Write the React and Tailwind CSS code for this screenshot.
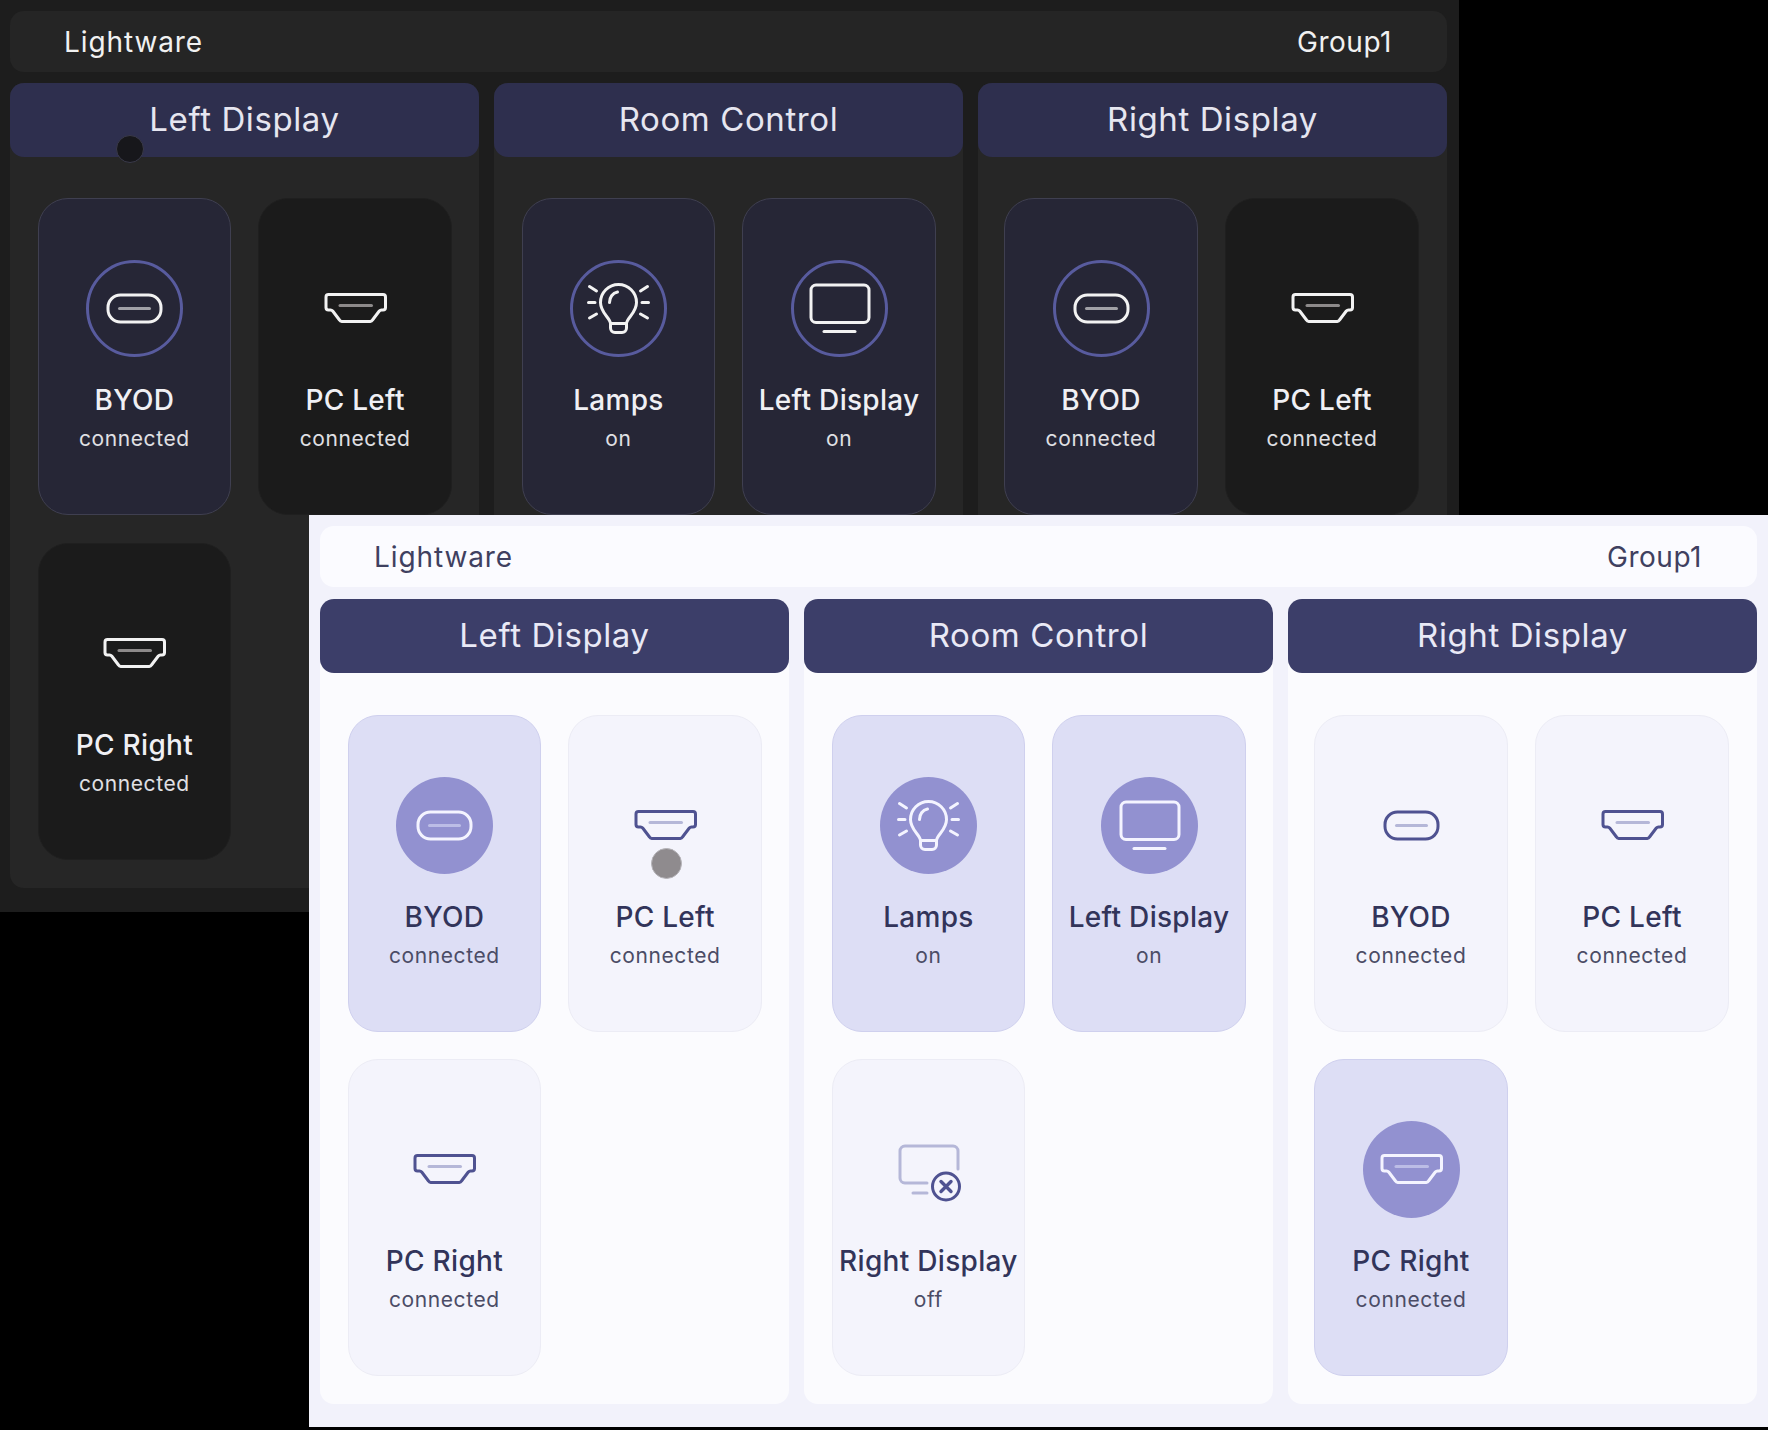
import React from "react";

const themes = {
  dark: {
    window: "bg-[#1d1d1d] pt-[11px] pl-[10px] pr-[12px]",
    bar: "bg-[#252525] text-[#f1f1f1]",
    gap: "mt-[11px]",
    body: "pt-[41px] gap-y-[28px]",
    panel: "bg-[#262626]",
    header: "bg-[#2e2f4e] text-[#e6e6f0]",
    on: "bg-[#262636] border-[#3f3f50]",
    off: "bg-[#1b1b1b] border-[#1f1f1f]",
    circle: "border-[3px] border-[#585b9e]",
    title: "text-[#f0f0f4]",
    sub: "text-[#e0e0e4]",
    icon: "#f2f2f2",
    iconOn: "#f2f2f2",
    slot: "#8d8a8a",
    slotOn: "#a0a0a6",
  },
  light: {
    window: "bg-[#f2f2fb] pt-[11px] px-[11px]",
    bar: "bg-[#fbfbff] text-[#3f4060]",
    gap: "mt-[12px]",
    body: "pt-[42px] gap-y-[27px]",
    panel: "bg-[#fbfbfe]",
    header: "bg-[#3c3e69] text-[#e9e9f6]",
    on: "bg-[#dddef5] border-[#cfd0ee]",
    off: "bg-[#f4f4fc] border-[#ececf5]",
    circle: "bg-[#9291d0]",
    title: "text-[#32345a]",
    sub: "text-[#4b4c66]",
    icon: "#4f5291",
    iconOn: "#f4f4ff",
    slot: "#b5b7d8",
    slotOn: "#bcbde6",
  },
};

function Hdmi({ color, slot }) {
  return (
    <>
      <path d="M21.500 34.500H76A2.500 2.500 0 0 1 78.500 37V47.500A2.500 2.500 0 0 1 76 50H74.500A3 3 0 0 0 72.300 51L65.500 60A3 3 0 0 1 63.200 61.500H34.800A3 3 0 0 1 32.500 60L25.700 51A3 3 0 0 0 23.500 50H21.500A2.500 2.500 0 0 1 19 47.500V37A2.500 2.500 0 0 1 21.500 34.500Z" stroke={color} />
      <path d="M33 45.500h31.500" stroke={slot} />
    </>
  );
}

function Usb({ color, slot }) {
  return (
    <>
      <rect x="22" y="35" width="53" height="27" rx="12.500" stroke={color} />
      <path d="M33.500 48.500h30" stroke={slot} />
    </>
  );
}

function Lamp({ color }) {
  return (
    <g stroke={color}>
      <path d="M40.500 63.500c-.5-6-10-10.500-10-21a18 18 0 0 1 36 0c0 10.500-9.500 15-10 21z" />
      <path d="M40.500 63.500v4.500a4.500 4.500 0 0 0 4.500 4.500h7a4.500 4.500 0 0 0 4.500-4.500v-4.500" />
      <path d="M39.500 42.500c0-5 3-9.500 8-10.500" />
      <path d="M19.500 26.500l7 4.500M18.500 42.500h6.500M19.500 58l7-4M70.500 31l7-4.500M72 42.500h6.500M70.500 54l7 4" />
    </g>
  );
}

function Monitor({ color }) {
  return (
    <g stroke={color}>
      <rect x="20" y="25" width="58" height="37.500" rx="5" />
      <path d="M33 71.500h31" />
    </g>
  );
}

function MonitorOff({ color, slot }) {
  return (
    <>
      <path d="M78 48V30a5 5 0 0 0-5-5H25a5 5 0 0 0-5 5v27a5 5 0 0 0 5 5h22M33 72h14" stroke={slot} />
      <circle cx="66" cy="65.500" r="13.500" stroke={color} />
      <path d="M61 60.500l10 10M71 60.500l-10 10" stroke={color} strokeWidth="3.400" />
    </>
  );
}

const icons = { hdmi: Hdmi, usb: Usb, lamp: Lamp, monitor: Monitor, off: MonitorOff };

function Card({ theme, icon, title, sub, on }) {
  const t = themes[theme];
  const Icon = icons[icon];
  return (
    <div className={`flex h-[317px] flex-col items-center rounded-[30px] border pt-[61px] ${on ? t.on : t.off}`}>
      <div className={`relative h-[97px] w-[97px] rounded-full ${on ? t.circle : ""}`}>
        <svg viewBox="0 0 97 97" fill="none" strokeWidth="3" strokeLinecap="round" strokeLinejoin="round" className={`absolute h-[97px] w-[97px] ${on && theme === "dark" ? "-top-[3px] -left-[3px]" : "top-0 left-0"}`}>
          <Icon color={on ? t.iconOn : t.icon} slot={on ? t.slotOn : t.slot} />
        </svg>
      </div>
      <div className={`mt-[27px] text-[28px] leading-[32px] font-medium tracking-[0.3px] whitespace-nowrap ${t.title}`}>{title}</div>
      <div className={`mt-[10px] text-[21px] leading-[26px] tracking-[0.6px] ${t.sub}`}>{sub}</div>
    </div>
  );
}

function Column({ theme, title, cards, inset }) {
  const t = themes[theme];
  return (
    <section className={`rounded-[14px] ${t.panel}`}>
      <h2 className={`flex h-[74px] items-center justify-center rounded-[14px] text-[33px] font-normal tracking-[0.6px] ${t.header}`}>{title}</h2>
      <div className={`grid grid-cols-2 gap-x-[27px] pb-[28px] ${t.body} ${inset ? "pr-[28px] pl-[26px]" : "pr-[27px] pl-[27.5px]"}`}>
        {cards.map((card) => (
          <Card key={card.title} theme={theme} {...card} />
        ))}
      </div>
    </section>
  );
}

function Panel({ theme, columns, className }) {
  const t = themes[theme];
  return (
    <div className={`absolute flex h-[912px] w-[1459px] flex-col overflow-hidden ${t.window} ${className}`}>
      <header className={`flex h-[61px] shrink-0 items-center justify-between rounded-[14px] pr-[55px] pl-[54px] text-[28px] tracking-[0.5px] ${t.bar}`}>
        <span className="tracking-[0.9px]">Lightware</span>
        <span>Group1</span>
      </header>
      <div className={`grid grid-cols-3 gap-[15px] ${t.gap}`}>
        {columns.map((col) => (
          <Column key={col.title} theme={theme} {...col} />
        ))}
      </div>
    </div>
  );
}

const darkColumns = [
  {
    title: "Left Display",
    cards: [
      { icon: "usb", title: "BYOD", sub: "connected", on: true },
      { icon: "hdmi", title: "PC Left", sub: "connected" },
      { icon: "hdmi", title: "PC Right", sub: "connected" },
    ],
  },
  {
    title: "Room Control",
    cards: [
      { icon: "lamp", title: "Lamps", sub: "on", on: true },
      { icon: "monitor", title: "Left Display", sub: "on", on: true },
      { icon: "off", title: "Right Display", sub: "off" },
    ],
  },
  {
    title: "Right Display",
    inset: true,
    cards: [
      { icon: "usb", title: "BYOD", sub: "connected", on: true },
      { icon: "hdmi", title: "PC Left", sub: "connected" },
      { icon: "hdmi", title: "PC Right", sub: "connected" },
    ],
  },
];

const lightColumns = [
  darkColumns[0],
  darkColumns[1],
  {
    title: "Right Display",
    inset: true,
    cards: [
      { icon: "usb", title: "BYOD", sub: "connected" },
      { icon: "hdmi", title: "PC Left", sub: "connected" },
      { icon: "hdmi", title: "PC Right", sub: "connected", on: true },
    ],
  },
];

export default function App() {
  return (
    <div className="relative h-[1430px] w-[1768px] overflow-hidden bg-black font-['Inter',sans-serif]">
      <Panel theme="dark" columns={darkColumns} className="top-0 left-0" />
      <div className="absolute top-[135px] left-[116px] h-[28px] w-[28px] rounded-full border border-[#3a3a4a] bg-[#17171b]" />
      <Panel theme="light" columns={lightColumns} className="top-[515px] left-[309px]" />
      <div className="absolute top-[848px] left-[651px] h-[31px] w-[31px] rounded-full border border-[#b5b3b8] bg-[#8f8b8e]" />
    </div>
  );
}
